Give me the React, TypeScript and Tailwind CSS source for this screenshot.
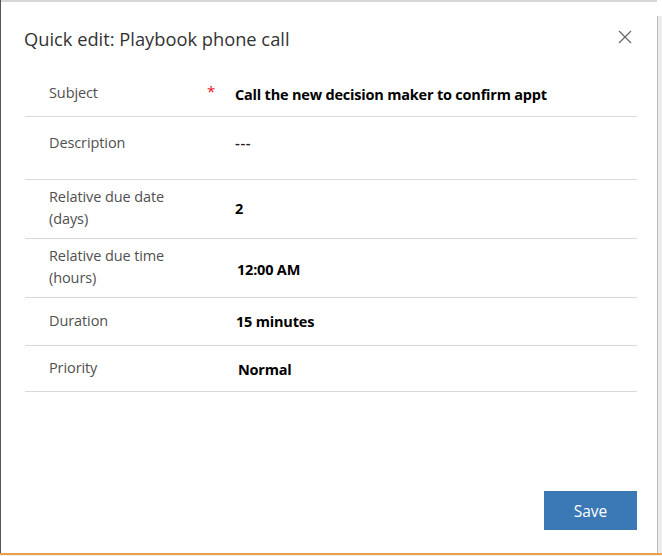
import React from "react";

type Row = {
  label: string[];
  value: string;
  h: string;
  lpt: string;
  vpt: string;
  req?: boolean;
  bold?: boolean;
  vx?: string;
};

const rows: Row[] = [
  { label: ["Subject"], value: "Call the new decision maker to confirm appt", h: "h-[47px]", lpt: "pt-[12px]", vpt: "pt-[14px]", req: true, vx: "pl-0" },
  { label: ["Description"], value: "---", h: "h-[63px]", lpt: "pt-[15px]", vpt: "pt-[14px]", bold: false, vx: "pl-0" },
  { label: ["Relative due date", "(days)"], value: "2", h: "h-[59px]", lpt: "pt-[6px]", vpt: "pt-[18px]", vx: "pl-0" },
  { label: ["Relative due time", "(hours)"], value: "12:00 AM", h: "h-[59px]", lpt: "pt-[6px]", vpt: "pt-[20px]", vx: "pl-[2px]" },
  { label: ["Duration"], value: "15 minutes", h: "h-[48px]", lpt: "pt-[12px]", vpt: "pt-[13px]", vx: "pl-[1px]" },
  { label: ["Priority"], value: "Normal", h: "h-[46px]", lpt: "pt-[11px]", vpt: "pt-[13px]", vx: "pl-[3px]" },
];

export default function App() {
  return (
    <div
      className="w-[662px] h-[556px] flex flex-col bg-white overflow-hidden"
      style={{ fontFamily: '"Open Sans", "Noto Sans", sans-serif' }}
    >
      <div className="flex flex-1 min-h-0">
        <div className="w-px bg-[#555555]" />
        <div className="flex-1 flex flex-col border-t-2 border-[#d6d6d6]">
          <div className="flex items-start justify-between pl-[23px] pr-[25px] pt-[24px] h-[68px]">
            <div className="text-[18.3px] leading-[26px] text-[#333333]">
              Quick edit: Playbook phone call
            </div>
            <svg width="14" height="14" viewBox="0 0 14 14" className="mt-[4px]">
              <path d="M1 1 L13 13 M13 1 L1 13" stroke="#666666" strokeWidth="1.2" fill="none" />
            </svg>
          </div>
          <div className="ml-[24px] w-[612px] flex flex-col">
            {rows.map((r, i) => (
              <div key={i} className={`flex border-b border-[#d9d9d9] ${r.h}`}>
                <div className={`w-[182px] pl-[24px] ${r.lpt} text-[14.5px] leading-[22px] text-[#505050] tracking-[-0.1px]`}>
                  {r.label.map((l, j) => (
                    <div key={j}>{l}</div>
                  ))}
                </div>
                <div className={`w-[28px] pt-[12px] leading-[18px] text-[15px] text-[#e81123]`}>
                  {r.req ? "*" : null}
                </div>
                <div
                  className={`${r.vpt} ${r.vx} leading-[22px] ${
                    r.bold === false
                      ? "font-semibold text-[#222222] text-[15px] tracking-[0.6px]"
                      : "font-bold text-black text-[14.5px] tracking-[-0.2px]"
                  }`}
                >
                  {r.value}
                </div>
              </div>
            ))}
          </div>
          <div className="flex-1" />
          <div className="flex justify-end pr-[20px] pb-[23px]">
            <button className="w-[93px] h-[39px] bg-[#3b78b6] text-white text-[15.5px] leading-[20px]">
              Save
            </button>
          </div>
        </div>
        <div className="w-[5px] flex flex-col">
          <div className="h-[16px] bg-white" />
          <div className="flex-1 flex">
            <div className="w-px bg-[#bdbdbd]" />
            <div className="flex-1 bg-[#ececec]" />
          </div>
        </div>
      </div>
      <div className="h-[2px] bg-[#e8a04a]" />
      <div className="h-px bg-[#f2f2f2]" />
    </div>
  );
}
